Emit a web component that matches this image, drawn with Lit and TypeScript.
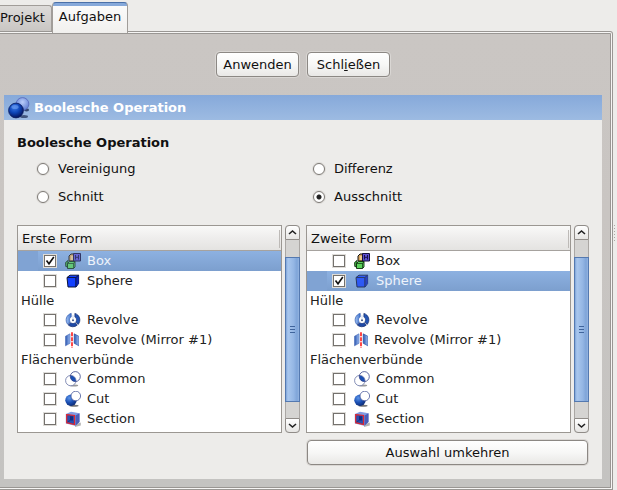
import { LitElement, html, css, svg } from "lit";
import { customElement, property, state } from "lit/decorators.js";
import { classMap } from "lit/directives/class-map.js";

type IconName = "fusion" | "box" | "cube" | "revolve" | "mirror" | "common" | "cut" | "section";

const glyphs = {
  fusion: svg`
    <defs>
      <radialGradient id="a" cx=".4" cy=".3" r=".7"><stop offset="0" stop-color="#3c7be6"/><stop offset=".5" stop-color="#0f46b8"/><stop offset="1" stop-color="#04145c"/></radialGradient>
      <radialGradient id="b" cx=".5" cy=".35" r=".7"><stop offset="0" stop-color="#b9cdfa"/><stop offset="1" stop-color="#5272cc"/></radialGradient>
    </defs>
    <ellipse cx="16" cy="19.5" rx="4" ry="1.5" fill="#1c2c52" opacity=".7"/>
    <ellipse cx="18.5" cy="13" rx="2.6" ry="1.4" fill="#1c2c52" opacity=".8"/>
    <circle cx="14.5" cy="7" r="6.4" fill="url(#b)" stroke="#5566b8" stroke-width=".8"/>
    <circle cx="8" cy="13.5" r="7.4" fill="url(#a)" stroke="#0a1a5c" stroke-width=".8"/>
    <ellipse cx="7" cy="10" rx="3.6" ry="2" fill="#6fa0f4" opacity=".6"/>`,
  box: svg`
    <path d="M4 8V3l2-2h4v7z" fill="#d9a55c" stroke="#111" stroke-width="1"/>
    <path d="M6 3h3v4H6z" fill="#ecc98e"/>
    <path d="M8.500 .5h7v7.500h-7z" fill="#5d4fd0" stroke="#16103c" stroke-width="1"/>
    <path d="M10.500 2v4.500M13.500 2v4.500M10.500 4.300h3" stroke="#17104a" stroke-width="1" fill="none"/>
    <path d="M.6 9.500L3 7.500v6.500l-2.200-.5z" fill="#43b443" stroke="#0c2a0c" stroke-width=".9"/>
    <path d="M2.500 10.500L4.500 8.500H10v5.500l-1.500 1.500h-6z" fill="#5bd35b" stroke="#0c2a0c" stroke-width=".9"/>
    <path d="M2.500 10.500h6v5M8.500 10.500L10 8.500" fill="none" stroke="#0c2a0c" stroke-width=".7"/>`,
  cube: svg`
    <path d="M2 4.500L5 2.200h8.600v8.300L11 14H3z" fill="#1240ff" stroke="#0a1238" stroke-width="1"/>
    <path d="M10.800 4.500l2.800-2.200v8.200L11 13.800z" fill="#0a22b8"/>
    <path d="M2 4.500h8.800L13.600 2.200M10.800 4.500V14" fill="none" stroke="#0a1238" stroke-width=".9"/>`,
  revolve: svg`
    <defs><linearGradient id="r"><stop offset="0" stop-color="#a3c4f4"/><stop offset="1" stop-color="#3f72cc"/></linearGradient></defs>
    <path d="M6.200 1.400A6.800 6.800 0 0 0 2.600 12.200l2.800-2.400A3.400 3.400 0 0 1 6.200 5z" fill="url(#r)" stroke="#2a55ac" stroke-width=".7"/>
    <path d="M3.200 13A7 7 0 0 0 12.200 13.200l-2-2.800a3.400 3.400 0 0 1-4.400 0z" fill="#1f4aa6" stroke="#12296c" stroke-width=".7"/>
    <path d="M9.900 1.400A6.800 6.800 0 0 1 13.200 12.400L10.700 9.800A3.400 3.400 0 0 0 9.900 5z" fill="#2455b4" stroke="#12296c" stroke-width=".7"/>
    <circle cx="8" cy="8" r="2.900" fill="#fff"/><path d="M8 3v4" stroke="#c2cde2" stroke-width=".8"/><circle cx="8" cy="8.300" r="1" fill="#3a5488"/>`,
  mirror: svg`
    <defs><linearGradient id="m"><stop offset="0" stop-color="#2a55ae"/><stop offset="1" stop-color="#9dbdf2"/></linearGradient></defs>
    <path d="M.5 4.200L5 1.800v9.500L.5 13.800z" fill="url(#m)" stroke="#4a6cb8" stroke-width=".6"/>
    <path d="M9.200 1.800l4.600 2.400v9.600L9.200 11.300z" fill="url(#m)" stroke="#2448a0" stroke-width=".6"/>
    <path d="M7 .2v15.600" stroke="#f33" stroke-width="1.800" stroke-dasharray="4 1"/>`,
  common: svg`
    <defs><clipPath id="k"><circle cx="10.300" cy="5.600" r="5"/></clipPath></defs>
    <ellipse cx="9" cy="14.500" rx="4.200" ry="1" fill="#9a9a9a"/>
    <circle cx="5.800" cy="9.600" r="5.200" fill="#fff"/>
    <circle cx="10.300" cy="5.600" r="5" fill="#fff"/>
    <circle cx="5.800" cy="9.600" r="5.200" fill="#1a50b4" clip-path="url(#k)"/>
    <circle cx="5.800" cy="9.600" r="5.200" fill="none" stroke="#6672a4" stroke-width=".8"/>
    <circle cx="10.300" cy="5.600" r="5" fill="none" stroke="#35448a" stroke-width=".8"/>`,
  cut: svg`
    <defs><radialGradient id="c" cx=".35" cy=".3" r=".8"><stop offset="0" stop-color="#5c94e8"/><stop offset=".5" stop-color="#1b50b4"/><stop offset="1" stop-color="#0a2468"/></radialGradient></defs>
    <ellipse cx="9" cy="14.700" rx="4.600" ry="1" fill="#777"/>
    <circle cx="6" cy="9.300" r="5.700" fill="url(#c)"/>
    <circle cx="10.800" cy="5" r="4.800" fill="#fff" stroke="#4a5a9c" stroke-width=".8"/>`,
  section: svg`
    <path d="M10 13.500l5.800-2v3L10 16z" fill="#b4b4b4"/>
    <path d="M.8 3L6 .8l8.500 1.500V11L10 14.800.8 12.500z" fill="#7f9ae2"/>
    <path d="M10.500 4.500l4-2.200V11l-4 3.800z" fill="#4a5cb8"/>
    <path d="M1.700 3.600l7.800.9v9l-7.800-1.800z" fill="#2a4fae" stroke="#e0242e" stroke-width="1.200"/>
    <path d="M5 5.200h3v4.300H5z" fill="#142c80"/>
    <path d="M2.500 11L5 9.500" stroke="#142c80" stroke-width=".8"/>`,
};

@customElement("part-icon")
class PartIcon extends LitElement {
  @property() name: IconName = "cube";
  static styles = css`
    :host { display: block; line-height: 0; }
    svg { display: block; }
  `;
  render() {
    const w = this.name === "fusion" ? 22 : this.name === "mirror" ? 14 : 16;
    const h = this.name === "fusion" ? 22 : 16;
    return html`<svg width=${w} height=${h} viewBox="0 0 ${w} ${h}" aria-hidden="true">${glyphs[this.name]}</svg>`;
  }
}

interface Entry { label: string; icon?: IconName; }

const entries: Entry[] = [
  { label: "Box", icon: "box" },
  { label: "Sphere", icon: "cube" },
  { label: "Hülle" },
  { label: "Revolve", icon: "revolve" },
  { label: "Revolve (Mirror #1)", icon: "mirror" },
  { label: "Flächenverbünde" },
  { label: "Common", icon: "common" },
  { label: "Cut", icon: "cut" },
  { label: "Section", icon: "section" },
];

@customElement("shape-list")
class ShapeList extends LitElement {
  @property() heading = "";
  @property() selected = "";

  static styles = css`
    :host { display: flex; gap: 3px; min-width: 0; }
    .list {
      flex: 1; min-width: 0; box-sizing: border-box; background: #fff;
      border: 1px solid #9b9792; padding-bottom: 3px;
    }
    .head {
      display: flex; align-items: center; justify-content: space-between;
      height: 24px; padding: 2px 1px 0 4px; box-sizing: border-box; border-bottom: 1px solid #a6a29e;
      height: 25px;
      background: linear-gradient(#f9f9f8, #eeedec 50%, #e4e3e1);
    }
    .divider { width: 1px; height: 18px; background: #bdbab7; }
    ul { list-style: none; margin: 0; padding: 0; }
    .group { height: 19px; line-height: 19px; padding-left: 3px; color: #222; }
    .row { display: flex; height: 20px; color: #222; }
    .row.on { background: linear-gradient(#8db1e1, #7c9fce); color: #eef3fb; }
    .indent { width: 20px; }
    .on .indent { background: #80a3d3; }
    .entry { display: flex; align-items: center; flex: 1; padding-left: 6px; white-space: nowrap; }
    .tick { display: grid; width: 12px; height: 12px; margin-right: 9px; }
    .tick > * { grid-area: 1 / 1; }
    .tick svg { pointer-events: none; display: none; }
    input:checked + svg { display: block; }
    input {
      appearance: none; margin: 0; width: 12px; height: 12px; box-sizing: border-box;
      border: 1px solid #74716d; background: #fff; box-shadow: 0 0 0 1px #dedcd8;
    }
    .on part-icon { opacity: .75; }
    part-icon { margin-right: 6px; }
    .bar {
      display: flex; flex-direction: column; width: 15px; box-sizing: border-box;
      background: #d5d4d2; border-radius: 4px;
    }
    .step {
      display: grid; place-items: center; width: 15px; height: 15px; padding: 0; margin: 0;
      box-sizing: border-box; border: 1px solid #908c88;
      background: linear-gradient(#fff, #e6e5e3);
    }
    .up { border-radius: 4px 4px 0 0; }
    .down { border-radius: 0 0 4px 4px; }
    .trough { flex: 1; display: flex; padding: 17px 0 16px; border: solid #aaa7a4; border-width: 0 1px; }
    .thumb {
      flex: 1; margin: 0 -1px; border: 1px solid #5479b0;
      background: linear-gradient(90deg, #7fa5d9, #a9c7ee 15%, #94b6e4 60%, #7ea4d8 85%, #94b4e0);
      display: flex; flex-direction: column; gap: 2px; align-items: center; justify-content: center;
    }
    .grip { width: 5px; height: 1px; background: #3f649c; }
  `;

  render() {
    return html`
      <div class="list">
        <div class="head"><span>${this.heading}</span><span class="divider"></span></div>
        <ul>
          ${entries.map((e) => e.icon
            ? html`<li class=${classMap({ row: true, on: e.label === this.selected })}>
                <span class="indent"></span>
                <label class="entry">
                  <span class="tick">
                    <input type="checkbox" .checked=${e.label === this.selected}>
                    <svg width="12" height="12" viewBox="0 0 12 12"><path d="M2.500 5.500L5 8.800 9.800 2" fill="none" stroke="#111" stroke-width="1.600"/></svg>
                  </span>
                  <part-icon name=${e.icon}></part-icon><span>${e.label}</span>
                </label>
              </li>`
            : html`<li class="group">${e.label}</li>`)}
        </ul>
      </div>
      <div class="bar">
        <button class="step up" aria-label="Nach oben"><svg width="9" height="7" viewBox="0 0 9 7"><path d="M1 5l3.500-3L8 5" fill="none" stroke="#222" stroke-width="1.600"/></svg></button>
        <div class="trough"><div class="thumb"><i class="grip"></i><i class="grip"></i><i class="grip"></i></div></div>
        <button class="step down" aria-label="Nach unten"><svg width="9" height="7" viewBox="0 0 9 7"><path d="M1 2l3.500 3L8 2" fill="none" stroke="#222" stroke-width="1.600"/></svg></button>
      </div>`;
  }
}

@customElement("app-root")
class AppRoot extends LitElement {
  @state() private operation = "Ausschnitt";

  static styles = css`
    :host {
      display: flex; flex-direction: column; min-height: 100vh; background: #edecea;
      font: 13px/16px "DejaVu Sans", sans-serif; color: #111;
    }
    button, input { font: inherit; color: inherit; }
    .tabs { display: flex; align-items: flex-end; height: 31px; padding-top: 2px; box-sizing: border-box; }
    .tab {
      border: 1px solid #a19d99; border-left: 0; border-bottom: 0; height: 26px; margin: 0;
      padding: 0 6px 1px 0; border-radius: 0 3px 0 0; background: linear-gradient(#dddbd9, #c9c6c3);
    }
    .tab.active {
      position: relative; height: 31px; margin-bottom: -2px; padding: 0 6px 3px;
      border: 1px solid #a19d99; border-top: 1px solid #4a70a8; border-bottom: 0; border-radius: 4px 4px 0 0;
      background: linear-gradient(#86a9da 3px, #fbfbfa 3px, #f1f0ee);
    }
    .main { flex: 1; display: flex; }
    .pane {
      flex: 1; min-width: 0; display: flex; flex-direction: column; border: 3px double #999693; border-left: 0;
      border-radius: 0 3px 0 0; padding: 18px 8px 8px 4px;
      background: linear-gradient(#cac6c3, #c9c5c2 40%, #c4c3c1) padding-box, #f6f5f4;
    }
    .splitter { width: 3px; padding: 194px 0 0 1px; display: flex; flex-direction: column; gap: 2px; }
    .splitter i { width: 1px; height: 1px; background: #aaa7a3; }
    .actions { display: flex; justify-content: center; gap: 8px; margin-bottom: 18px; }
    .push {
      height: 25px; box-sizing: border-box; padding: 0 6px; border: 1px solid #8c8884; border-radius: 4px;
      background: linear-gradient(#fff, #f7f7f6 50%, #e9e8e6); box-shadow: 0 0 0 1px #dad7d4;
    }
    .actions .push { width: 83px; white-space: nowrap; }
    .title {
      display: flex; align-items: center; gap: 4px; height: 25px; padding-left: 4px;
      color: #fff; font-weight: bold; background: linear-gradient(#86a9da, #9dbbe2);
    }
    .body { flex: 1; background: #edecea; padding: 15px 13px 14px; }
    h2 { font: inherit; font-weight: bold; margin: 0 0 4px; }
    .radios { display: grid; grid-template-columns: 1fr 1fr; margin: 0 20px 14px 0; }
    .radio { display: flex; align-items: center; gap: 9px; height: 28px; padding-left: 20px; }
    .radio input {
      appearance: none; margin: 0; width: 12px; height: 12px; box-sizing: border-box; border-radius: 50%;
      border: 1px solid #7d7975; background: #fff; box-shadow: 0 0 0 1px #dedcd9;
    }
    .radio input:checked { background: radial-gradient(circle, #222 0 2px, #fff 3px); }
    .lists { display: grid; grid-template-columns: 1fr 1fr; gap: 7px 6px; }
    .invert { grid-column: 2; margin: 0 1px; }
  `;

  render() {
    return html`
      <nav class="tabs" role="tablist">
        <button class="tab" role="tab">Projekt</button>
        <button class="tab active" role="tab" aria-selected="true">Aufgaben</button>
      </nav>
      <div class="main">
        <main class="pane">
          <div class="actions">
            <button class="push">Anwenden</button>
            <button class="push">Schl<u>i</u>eßen</button>
          </div>
          <div class="title"><part-icon name="fusion"></part-icon><span>Boolesche Operation</span></div>
          <section class="body">
            <h2>Boolesche Operation</h2>
            <div class="radios">
              ${["Vereinigung", "Differenz", "Schnitt", "Ausschnitt"].map((o) => html`
                <label class="radio">
                  <input type="radio" name="operation" .checked=${o === this.operation} @change=${() => { this.operation = o; }}>
                  <span>${o}</span>
                </label>`)}
            </div>
            <div class="lists">
              <shape-list heading="Erste Form" selected="Box"></shape-list>
              <shape-list heading="Zweite Form" selected="Sphere"></shape-list>
              <button class="push invert">Auswahl umkehren</button>
            </div>
          </section>
        </main>
        <div class="splitter">${[0, 1, 2, 3, 4, 5].map(() => html`<i></i>`)}</div>
      </div>`;
  }
}
